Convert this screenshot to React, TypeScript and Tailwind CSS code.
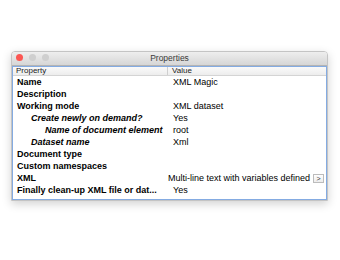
import * as React from 'react'

type Row = {
  label: string
  value?: string
  level?: 0 | 1 | 2
  button?: boolean
}

const rows: Row[] = [
  { label: 'Name', value: 'XML Magic' },
  { label: 'Description' },
  { label: 'Working mode', value: 'XML dataset' },
  { label: 'Create newly on demand?', value: 'Yes', level: 1 },
  { label: 'Name of document element', value: 'root', level: 2 },
  { label: 'Dataset name', value: 'Xml', level: 1 },
  { label: 'Document type' },
  { label: 'Custom namespaces' },
  { label: 'XML', value: 'Multi-line text with variables defined', button: true },
  { label: 'Finally clean-up XML file or dat...', value: 'Yes' },
]

const indent = ['pl-[4px]', 'pl-[18px] italic', 'pl-[32px] italic']

function PropertyRow({ row }: { row: Row }) {
  return (
    <div className="flex h-[12px] items-center text-[9px] leading-[12px] text-black">
      <div className={`w-[155px] shrink-0 overflow-hidden whitespace-nowrap font-bold ${indent[row.level ?? 0]}`}>
        {row.label}
      </div>
      {row.button ? (
        <div className="flex min-w-0 flex-1 items-center justify-end overflow-hidden pr-[2px]">
          <span className="shrink-0 whitespace-nowrap">{row.value}</span>
          <span className="ml-[3px] flex h-[9px] w-[11px] shrink-0 items-center justify-center border border-[#bcbcbc] bg-gradient-to-b from-white to-[#ececec] text-[7px] leading-none text-[#333]">
            &gt;
          </span>
        </div>
      ) : (
        <div className="min-w-0 flex-1 overflow-hidden whitespace-nowrap pl-[5px]">{row.value}</div>
      )}
    </div>
  )
}

export default function App() {
  return (
    <div className="h-[260px] w-[340px] bg-white pl-[11px] pt-[51px] font-['Liberation_Sans',Arial,sans-serif]">
      <div className="flex h-[150px] w-[317px] flex-col overflow-hidden rounded-t-[4px] border border-[#c4c4c4] bg-white shadow-[0_3px_10px_rgba(0,0,0,0.18)]">
        {/* Title bar */}
        <div className="relative flex h-[14px] shrink-0 items-center justify-center border-b border-[#b4b4b4] bg-gradient-to-b from-[#eeeeee] to-[#d6d6d6]">
          <div className="absolute left-[4px] top-[2px] flex gap-[6px]">
            <span className="h-[7px] w-[7px] rounded-full bg-[#fc5753]" />
            <span className="h-[7px] w-[7px] rounded-full bg-[#cfcfcf]" />
            <span className="h-[7px] w-[7px] rounded-full bg-[#cfcfcf]" />
          </div>
          <span className="text-[8.5px] leading-none text-[#3a3a3a]">Properties</span>
        </div>

        {/* Table */}
        <div className="flex-1 border border-[#84abe2] bg-white">
          <div className="flex h-[9px] items-center border-b border-[#d4d4d4] bg-gradient-to-b from-[#fafafa] to-[#ededed] text-[8px] leading-none text-[#222]">
            <div className="w-[155px] shrink-0 border-r border-[#cfcfcf] pl-[3px]">Property</div>
            <div className="pl-[4px]">Value</div>
          </div>
          {rows.map((row) => (
            <PropertyRow key={row.label} row={row} />
          ))}
        </div>
      </div>
    </div>
  )
}
